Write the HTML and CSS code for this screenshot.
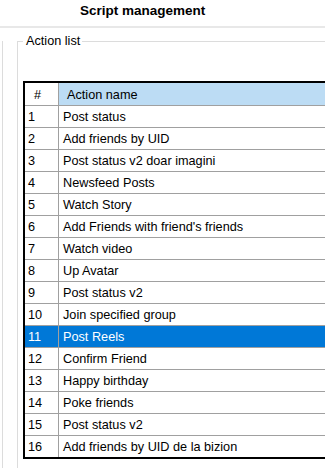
FILE: index.html
```html
<!doctype html>
<html lang="en">
<head>
	<meta charset="utf-8">
	<title>Script management</title>
	<link rel="stylesheet" href="styles.css">
</head>
<body>

	<header class="title-bar">Script management</header>

	<div class="content">
		<div class="side-strip"></div>

		<fieldset class="group">
			<legend>Action list</legend>

			<table class="action-table">
				<thead>
					<tr>
						<th class="col-num">#</th>
						<th class="col-name">Action name</th>
					</tr>
				</thead>
				<tbody>
					<tr><td class="col-num">1</td><td class="col-name">Post status</td></tr>
					<tr><td class="col-num">2</td><td class="col-name">Add friends by UID</td></tr>
					<tr><td class="col-num">3</td><td class="col-name">Post status v2 doar imagini</td></tr>
					<tr><td class="col-num">4</td><td class="col-name">Newsfeed Posts</td></tr>
					<tr><td class="col-num">5</td><td class="col-name">Watch Story</td></tr>
					<tr><td class="col-num">6</td><td class="col-name">Add Friends with friend's friends</td></tr>
					<tr><td class="col-num">7</td><td class="col-name">Watch video</td></tr>
					<tr><td class="col-num">8</td><td class="col-name">Up Avatar</td></tr>
					<tr><td class="col-num">9</td><td class="col-name">Post status v2</td></tr>
					<tr><td class="col-num">10</td><td class="col-name">Join specified group</td></tr>
					<tr class="selected"><td class="col-num">11</td><td class="col-name">Post Reels</td></tr>
					<tr><td class="col-num">12</td><td class="col-name">Confirm Friend</td></tr>
					<tr><td class="col-num">13</td><td class="col-name">Happy birthday</td></tr>
					<tr><td class="col-num">14</td><td class="col-name">Poke friends</td></tr>
					<tr><td class="col-num">15</td><td class="col-name">Post status v2</td></tr>
					<tr><td class="col-num">16</td><td class="col-name">Add friends by UID de la bizion</td></tr>
				</tbody>
			</table>
		</fieldset>
	</div>

</body>
</html>
```

FILE: styles.css
```css
html, body {
	margin: 0;
	padding: 0;
	overflow: hidden;
	background: #ffffff;
}
body {
	font-family: "Liberation Sans", Arial, sans-serif;
	font-size: 12.7px;
	color: #000000;
}

/* title */
.title-bar {
	height: 26px;
	line-height: 22px;
	padding-left: 80px;
	font-size: 13.5px;
	font-weight: bold;
	border-bottom: 2px solid #e8e8e8;
	box-sizing: border-box;
	height: 28px;
}

.content {
	display: flex;
	align-items: flex-start;
	padding-top: 5px;
}
.side-strip {
	flex: none;
	width: 2px;
	height: 440px;
	margin-top: 8px;
	border-right: 1px solid #dcdcdc;
}
.group {
	flex: none;
	width: 400px;
	height: 460px;
	margin: 0 0 0 14px;
	padding: 32px 0 0 5px;
	border: 1px solid #dcdcdc;
	box-sizing: border-box;
}
.group legend {
	padding: 0 2px 0 3px;
	line-height: 16px;
}

/* table */
.action-table {
	width: 380px;
	border-collapse: separate;
	border-spacing: 0;
	border-left: 2px solid #000000;
	border-top: 2px solid #000000;
	border-bottom: 2px solid #000000;
}
.action-table th,
.action-table td {
	padding: 2px 0 0 0;
	line-height: 19px;
	height: 19px;
	text-align: left;
	font-weight: normal;
	white-space: nowrap;
	border-bottom: 1px solid #a0a0a0;
}
.action-table th {
	line-height: 20px;
	height: 20px;
}
.action-table tbody tr:last-child td {
	border-bottom: none;
}
.col-num {
	width: 30px;
	padding-left: 3px !important;
	border-right: 1px solid #a0a0a0;
}
th.col-num {
	padding-left: 9px !important;
	width: 24px;
}
.col-name {
	padding-left: 4px !important;
}
th.col-name {
	padding-left: 8px !important;
	background: #bcdcf4;
}
.selected td {
	background: #0078d7;
	color: #ffffff;
}
```
